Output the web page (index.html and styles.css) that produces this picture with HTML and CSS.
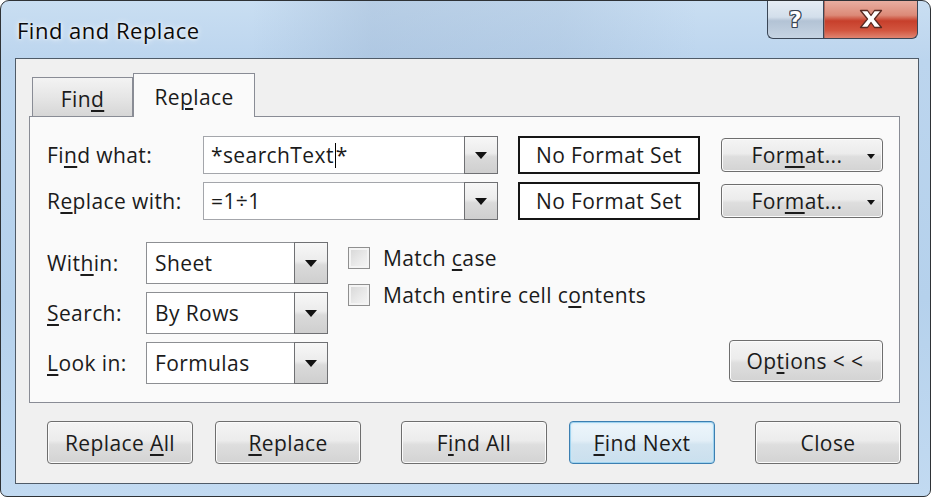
FILE: index.html
```html
<!DOCTYPE html>
<html>
<head>
<meta charset="utf-8">
<link rel="stylesheet" href="styles.css">
</head>
<body>
<div class="window">
  <div class="titlebar">
    <div class="title">Find and Replace</div>
    <div class="caption">
      <div class="cap help"><span class="q">?</span></div>
      <div class="cap close">
        <svg width="30" height="22" viewBox="0 0 30 22">
          <path d="M4.5 2.5 L11.5 2.5 L15 7.5 L18.5 2.5 L25.5 2.5 L18.5 11 L25.5 19.5 L18.5 19.5 L15 14.5 L11.5 19.5 L4.5 19.5 L11.5 11 Z" fill="#ffffff" stroke="#5a2a22" stroke-width="1.3" stroke-linejoin="round"/>
        </svg>
      </div>
    </div>
  </div>
  <div class="client">
    <div class="tabs">
      <div class="tab"><span>Fin<u>d</u></span></div>
      <div class="tab active"><span>Re<u>p</u>lace</span></div>
    </div>
    <div class="panel">
      <div class="row">
        <div class="label wide">Fi<u>n</u>d what:</div>
        <div class="combo text">
          <div class="value"><span>*searchText<span class="caret"></span>*</span></div>
          <div class="drop"><span class="arrow"></span></div>
        </div>
        <div class="nofmt"><span>No Format Set</span></div>
        <div class="btn fmt"><span>For<u>m</u>at...</span><span class="arrow small"></span></div>
      </div>
      <div class="row second">
        <div class="label wide">R<u>e</u>place with:</div>
        <div class="combo text">
          <div class="value"><span>=1÷1</span></div>
          <div class="drop"><span class="arrow"></span></div>
        </div>
        <div class="nofmt"><span>No Format Set</span></div>
        <div class="btn fmt"><span>For<u>m</u>at...</span><span class="arrow small"></span></div>
      </div>
      <div class="lower">
        <div class="selects">
          <div class="srow">
            <div class="label narrow">Wit<u>h</u>in:</div>
            <div class="combo sel"><div class="value"><span>Sheet</span></div><div class="drop"><span class="arrow"></span></div></div>
          </div>
          <div class="srow">
            <div class="label narrow"><u>S</u>earch:</div>
            <div class="combo sel"><div class="value"><span>By Rows</span></div><div class="drop"><span class="arrow"></span></div></div>
          </div>
          <div class="srow">
            <div class="label narrow"><u>L</u>ook in:</div>
            <div class="combo sel"><div class="value"><span>Formulas</span></div><div class="drop"><span class="arrow"></span></div></div>
          </div>
        </div>
        <div class="checks">
          <div class="check"><span class="box"></span><span>Match <u>c</u>ase</span></div>
          <div class="check"><span class="box"></span><span>Match entire cell c<u>o</u>ntents</span></div>
        </div>
        <div class="btn options"><span>Op<u>t</u>ions &lt; &lt;</span></div>
      </div>
    </div>
    <div class="buttons">
      <div class="btn big"><span>Replace <u>A</u>ll</span></div>
      <div class="btn big g1"><span><u>R</u>eplace</span></div>
      <div class="btn big g2"><span>F<u>i</u>nd All</span></div>
      <div class="btn big g1 default"><span><u>F</u>ind Next</span></div>
      <div class="btn big g2"><span>Close</span></div>
    </div>
  </div>
</div>
</body>
</html>
```
FILE: styles.css
```css
* { box-sizing: border-box; }
html, body { margin: 0; padding: 0; }
body {
  background: #ffffff;
  font-family: "Open Sans", "Noto Sans", sans-serif;
  color: #1b1b1b;
  width: 932px;
  height: 498px;
  overflow: hidden;
  letter-spacing: 0.4px;
}
u { text-decoration-thickness: 2px; text-underline-offset: 3px; }

.window {
  width: 931px;
  height: 497px;
  border: 1px solid #2e3236;
  border-radius: 9px 9px 7px 7px;
  background: linear-gradient(180deg, #c9def2 0%, #bcd5ee 12%, #b5d1ec 60%, #c2daf1 100%);
  overflow: hidden;
}

.titlebar {
  height: 57px;
  display: flex;
  justify-content: space-between;
  align-items: flex-start;
  background: linear-gradient(90deg, rgba(255,255,255,0) 0%, rgba(255,255,255,0) 27%, rgba(150,175,205,0.35) 40%, rgba(150,175,205,0.25) 60%, rgba(255,255,255,0) 75%);
}
.title {
  padding: 14px 0 0 16px;
  font-size: 22px;
  line-height: 30px;
  letter-spacing: 0.5px;
  color: #0a0a0a;
  text-shadow: 0 0 6px rgba(255,255,255,0.9), 0 0 3px rgba(255,255,255,0.9);
}
.caption {
  display: flex;
  margin-right: 12px;
  margin-top: -1px;
}
.cap {
  height: 39px;
  border: 1px solid #3a4656;
  border-top: none;
  display: flex;
  align-items: center;
  justify-content: center;
}
.help {
  width: 56px;
  border-radius: 0 0 0 6px;
  border-right: none;
  background: linear-gradient(180deg, #e6edf5 0%, #d3dfeb 45%, #b3c3d5 55%, #c6d4e3 100%);
}
.q {
  font-family: "DejaVu Sans", sans-serif;
  font-weight: bold;
  font-size: 22px;
  color: #ffffff;
  line-height: 22px;
  margin-top: 2px;
  text-shadow: 1px 0 0 #3a4656, -1px 0 0 #3a4656, 0 1px 0 #3a4656, 0 -1px 0 #3a4656, 1px 1px 0 #3a4656, -1px -1px 0 #3a4656, 1px -1px 0 #3a4656, -1px 1px 0 #3a4656;
}
.close {
  width: 95px;
  border-radius: 0 0 6px 0;
  background: linear-gradient(180deg, #e9b1a4 0%, #dc8a78 40%, #c73f2b 55%, #d2553f 80%, #e08572 100%);
  box-shadow: inset 1px 0 0 #b06a5e;
}

.client {
  margin-left: 14px;
  width: 904px;
  height: 426px;
  border: 1px solid #4f5b68;
  background: #f0f0f0;
}

.tabs {
  height: 57px;
  padding: 14px 0 0 16px;
  display: flex;
  align-items: flex-start;
}
.tab {
  height: 39px;
  margin-top: 4px;
  width: 101px;
  border: 1px solid #898c95;
  border-bottom: none;
  background: linear-gradient(180deg, #f3f3f3 0%, #e6e6e6 50%, #d6d6d6 100%);
  font-size: 21px;
  display: flex;
  align-items: center;
  justify-content: center;
  padding-top: 3px;
}
.tab.active {
  position: relative;
  z-index: 1;
  margin-top: 0;
  height: 44px;
  width: 122px;
  background: #fafafa;
  padding-top: 2px;
  padding-bottom: 0;
}

.panel {
  margin-left: 13px;
  width: 871px;
  height: 287px;
  border: 1px solid #898c95;
  background: #fafafa;
  padding: 19px 0 0 17px;
}

.row {
  display: flex;
  align-items: center;
  height: 38px;
}
.row.second { margin-top: 8px; }

.label {
  font-size: 21px;
  white-space: nowrap;
}
.label.wide { width: 156px; }
.label.narrow { width: 99px; }

.combo {
  display: flex;
  background: #ffffff;
  border: 1px solid #a4a6ab;
  font-size: 21px;
}
.combo.text { width: 295px; height: 38px; }
.combo.sel { width: 182px; height: 42px; border-color: #8d8f93; }
.combo .value {
  flex: 1;
  display: flex;
  align-items: center;
  padding-left: 7px;
  white-space: nowrap;
}
.combo.sel .value { padding-left: 8px; }
.caret {
  display: inline-block;
  width: 1px;
  height: 25px;
  background: #000;
  margin: 0 0 -5px 1px;
}
.drop {
  width: 34px;
  border: 1px solid #6f7073;
  margin: -1px -1px -1px 0;
  background: linear-gradient(180deg, #f7f7f7 0%, #ececec 45%, #dadada 55%, #cfcfcf 100%);
  display: flex;
  align-items: center;
  justify-content: center;
}
.arrow {
  width: 0;
  height: 0;
  border-left: 6px solid transparent;
  border-right: 6px solid transparent;
  border-top: 7px solid #111;
}
.arrow.small {
  border-left-width: 4px;
  border-right-width: 4px;
  border-top-width: 5px;
  position: absolute;
  right: 7px;
  top: 15px;
}

.nofmt {
  margin-left: 20px;
  width: 182px;
  height: 38px;
  border: 2px solid #151515;
  background: #ffffff;
  font-size: 21px;
  display: flex;
  align-items: center;
  justify-content: center;
  white-space: nowrap;
}

.btn {
  border: 1px solid #6e6e6e;
  border-radius: 4px;
  background: linear-gradient(180deg, #f4f4f4 0%, #ececec 45%, #dedede 55%, #d3d3d3 100%);
  box-shadow: inset 0 0 0 1px #fbfbfb;
  font-size: 21px;
  display: flex;
  align-items: center;
  justify-content: center;
  white-space: nowrap;
}
.btn.fmt {
  position: relative;
  margin-left: 21px;
  width: 162px;
  height: 34px;
  padding-right: 10px;
}

.lower {
  display: flex;
  margin-top: 22px;
}
.selects {
  display: flex;
  flex-direction: column;
  gap: 8px;
}
.srow {
  display: flex;
  align-items: center;
}
.checks {
  margin-left: 20px;
  padding-top: 5px;
  display: flex;
  flex-direction: column;
  gap: 15px;
}
.check {
  display: flex;
  align-items: center;
  height: 22px;
  font-size: 21px;
  white-space: nowrap;
}
.box {
  width: 22px;
  height: 22px;
  border: 1px solid #8f8f8f;
  background: linear-gradient(135deg, #d6d6d6 0%, #ebebeb 60%, #f6f6f6 100%);
  box-shadow: inset 0 0 0 2px #f4f4f4;
  margin-right: 13px;
  flex: none;
}
.btn.options {
  margin-left: auto;
  margin-right: 16px;
  margin-top: 98px;
  width: 154px;
  height: 42px;
  padding-right: 2px;
}

.buttons {
  display: flex;
  margin: 18px 0 0 31px;
}
.btn.big {
  width: 146px;
  height: 43px;
}
.btn.g1 { margin-left: 22px; }
.btn.g2 { margin-left: 40px; }
.btn.default {
  border-color: #3c7fb1;
  background: linear-gradient(180deg, #eef6fb 0%, #e3eff7 45%, #d2e4f0 55%, #cadfee 100%);
  box-shadow: inset 0 0 0 1px #9fd3ef, inset 0 0 3px 1px #cbe9f8;
}
```
